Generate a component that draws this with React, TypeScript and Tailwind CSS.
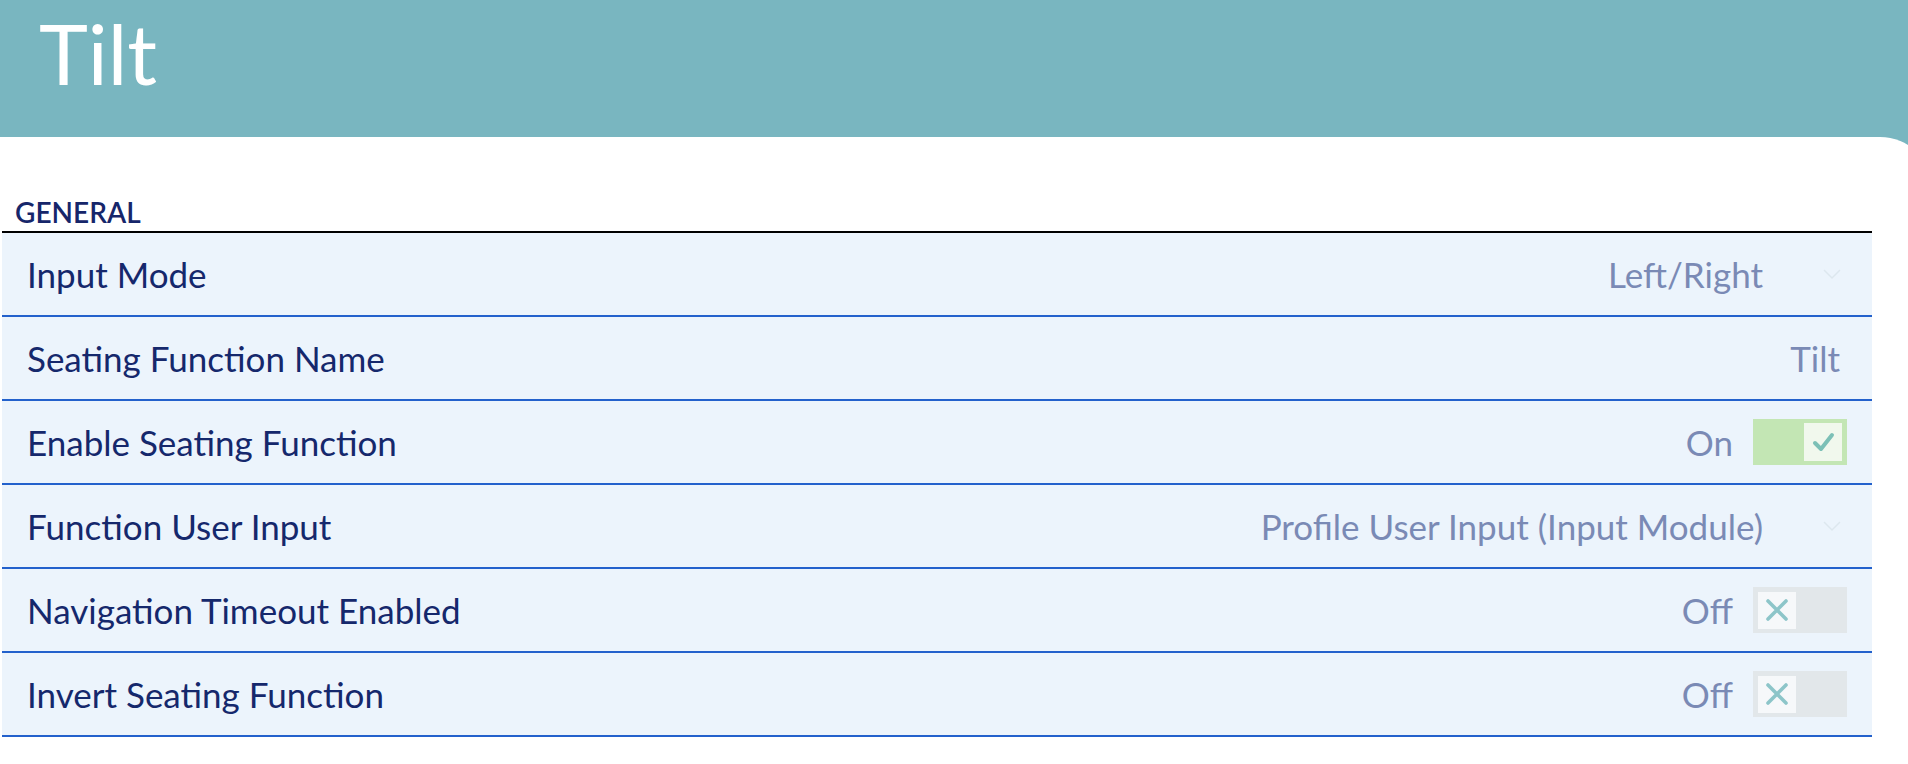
import React from "react";

type Row =
  | { label: string; kind: "select"; value: string }
  | { label: string; kind: "text"; value: string }
  | { label: string; kind: "toggle"; on: boolean };

const rows: Row[] = [
  { label: "Input Mode", kind: "select", value: "Left/Right" },
  { label: "Seating Function Name", kind: "text", value: "Tilt" },
  { label: "Enable Seating Function", kind: "toggle", on: true },
  { label: "Function User Input", kind: "select", value: "Profile User Input (Input Module)" },
  { label: "Navigation Timeout Enabled", kind: "toggle", on: false },
  { label: "Invert Seating Function", kind: "toggle", on: false },
];

function Toggle({ on }: { on: boolean }) {
  if (on) {
    return (
      <div className="flex h-[46px] w-[94px] items-center justify-end bg-[#c3e6b4] px-[5px]">
        <div className="flex h-[38px] w-[38px] items-center justify-center bg-[#f1f8ed]">
          <svg width="24" height="24" viewBox="0 0 24 24" fill="none">
            <path d="M4 13 L10 19 L21 5" stroke="#7cc0b6" strokeWidth="4" strokeLinecap="round" strokeLinejoin="round" />
          </svg>
        </div>
      </div>
    );
  }
  return (
    <div className="flex h-[46px] w-[94px] items-center justify-start bg-[#e2e7ea] px-[5px]">
      <div className="flex h-[37px] w-[38px] items-center justify-center bg-[#f6f8fa]">
        <svg width="24" height="24" viewBox="0 0 24 24" fill="none">
          <path d="M3 3 L21 21 M21 3 L3 21" stroke="#8dc5c9" strokeWidth="3.6" strokeLinecap="round" />
        </svg>
      </div>
    </div>
  );
}

function Value({ row }: { row: Row }) {
  if (row.kind === "toggle") {
    return (
      <div className="flex items-center gap-[20px] pr-[25px]">
        <span className="text-[#7a8ab5]">{row.on ? "On" : "Off"}</span>
        <Toggle on={row.on} />
      </div>
    );
  }
  if (row.kind === "select") {
    return (
      <div className="flex items-center pr-[30px]">
        <span className="text-[#7a8ab5]">{row.value}</span>
        <svg className="ml-[59px]" width="20" height="12" viewBox="0 0 20 12" fill="none">
          <path d="M2 2 L10 10 L18 2" stroke="#dde7ee" strokeWidth="1.5" />
        </svg>
      </div>
    );
  }
  return <span className="pr-[32px] text-[#7a8ab5]">{row.value}</span>;
}

export default function App() {
  return (
    <div className="flex min-h-screen flex-col overflow-hidden bg-[#79b6c0] font-['Lato','Liberation_Sans',sans-serif]">
      <header className="h-[137px] shrink-0 pl-[39px] pt-[12px]">
        <h1 className="text-[83px] leading-none text-white">Tilt</h1>
      </header>

      <main className="mr-[-25px] flex-1 rounded-tr-[53px] bg-white pl-[2px] pr-[61px] pt-[60px]">
        <div className="border-b-2 border-black pb-[4px] pl-[13px] text-[28px] font-semibold leading-[30px] text-[#16266a]">
          GENERAL
        </div>
        {rows.map((row) => (
          <div
            key={row.label}
            className="flex h-[84px] items-center justify-between border-b-2 border-[#2361cc] bg-[#ecf4fc] pl-[25px] text-[35px]"
          >
            <span className="text-[#15286c]">{row.label}</span>
            <Value row={row} />
          </div>
        ))}
      </main>
    </div>
  );
}
